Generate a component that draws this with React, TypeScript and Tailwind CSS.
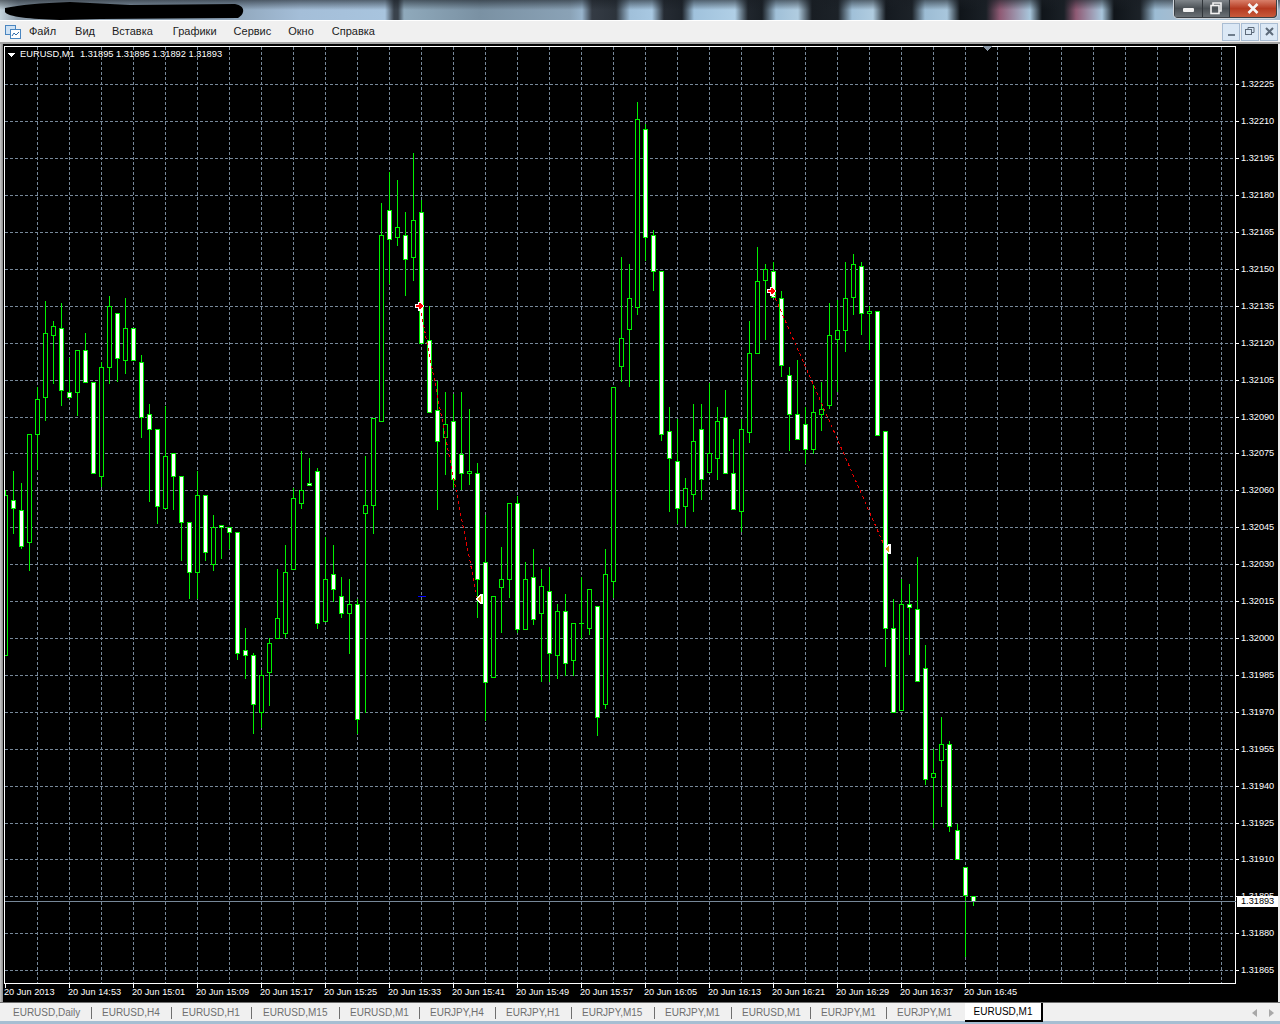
// MT4-style candle chart window
const MENU = [
  { label: 'Файл', ml: '' },
  { label: 'Вид', ml: 'ml-[19px]' },
  { label: 'Вставка', ml: 'ml-[17px]' },
  { label: 'Графики', ml: 'ml-[20px]' },
  { label: 'Сервис', ml: 'ml-[17px]' },
  { label: 'Окно', ml: 'ml-[17px]' },
  { label: 'Справка', ml: 'ml-[18px]' },
];

const GRID_Y = [84, 121, 158, 195, 232, 269, 306, 343, 380, 417, 453, 490, 527, 564, 601, 638, 675, 712, 749, 786, 823, 859, 896, 933, 970];
const PRICES = ['1.32225', '1.32210', '1.32195', '1.32180', '1.32165', '1.32150', '1.32135', '1.32120', '1.32105', '1.32090', '1.32075', '1.32060', '1.32045', '1.32030', '1.32015', '1.32000', '1.31985', '1.31970', '1.31955', '1.31940', '1.31925', '1.31910', '1.31895', '1.31880', '1.31865'];
const TIMES = ['20 Jun 2013', '20 Jun 14:53', '20 Jun 15:01', '20 Jun 15:09', '20 Jun 15:17', '20 Jun 15:25', '20 Jun 15:33', '20 Jun 15:41', '20 Jun 15:49', '20 Jun 15:57', '20 Jun 16:05', '20 Jun 16:13', '20 Jun 16:21', '20 Jun 16:29', '20 Jun 16:37', '20 Jun 16:45'];

const TABS = [
  { label: 'EURUSD,Daily', w: 'w-[89px] pl-[10px]' },
  { label: 'EURUSD,H4', w: 'w-[80px] pl-[10px]' },
  { label: 'EURUSD,H1', w: 'w-[80px] pl-[10px]' },
  { label: 'EURUSD,M15', w: 'w-[88px] pl-[11px]' },
  { label: 'EURUSD,M1', w: 'w-[80px] pl-[10px]' },
  { label: 'EURJPY,H4', w: 'w-[76px] pl-[10px]' },
  { label: 'EURJPY,H1', w: 'w-[76px] pl-[10px]' },
  { label: 'EURJPY,M15', w: 'w-[83px] pl-[10px]' },
  { label: 'EURJPY,M1', w: 'w-[77px] pl-[10px]' },
  { label: 'EURUSD,M1', w: 'w-[79px] pl-[10px]' },
  { label: 'EURJPY,M1', w: 'w-[76px] pl-[10px]' },
  { label: 'EURJPY,M1', w: 'w-[78px] pl-[10px]' },
];

// [filled, wickTop, bodyTop, bodyBottom, wickBottom], one candle per 8px starting at x=5
const CANDLES: number[][] = [
  [0, 490, 495, 655, 655], [1, 471, 500, 508, 533], [1, 483, 510, 546, 548], [0, 434, 434, 542, 570],
  [0, 387, 399, 434, 469], [0, 301, 333, 397, 420], [0, 321, 326, 335, 383], [1, 303, 328, 390, 405],
  [1, 358, 392, 397, 398], [0, 350, 350, 392, 415], [1, 333, 350, 382, 382], [1, 382, 382, 473, 473],
  [0, 362, 367, 476, 486], [0, 296, 306, 367, 383], [1, 313, 313, 358, 381], [0, 298, 328, 360, 373],
  [1, 328, 328, 360, 360], [1, 355, 362, 417, 437], [1, 404, 414, 429, 501], [1, 429, 429, 506, 523],
  [0, 406, 456, 508, 508], [1, 453, 453, 476, 509], [1, 476, 476, 522, 560], [1, 522, 522, 572, 598],
  [0, 471, 495, 572, 598], [1, 495, 495, 552, 560], [0, 515, 527, 564, 570], [1, 525, 525, 527, 558],
  [1, 527, 527, 532, 548], [1, 532, 532, 653, 659], [1, 628, 650, 655, 678], [1, 653, 655, 704, 733],
  [0, 670, 675, 712, 727], [0, 638, 643, 672, 705], [0, 569, 618, 638, 638], [0, 545, 572, 633, 637],
  [0, 488, 498, 569, 569], [0, 451, 490, 503, 508], [1, 458, 483, 485, 485], [1, 468, 471, 623, 628],
  [0, 537, 579, 621, 621], [1, 545, 574, 589, 601], [1, 577, 596, 613, 617], [0, 579, 604, 613, 653],
  [1, 599, 604, 719, 733], [0, 456, 505, 513, 712], [0, 418, 418, 505, 533], [0, 203, 235, 421, 421],
  [1, 172, 210, 239, 283], [0, 180, 227, 237, 245], [1, 212, 235, 259, 295], [0, 153, 220, 257, 280],
  [1, 200, 212, 343, 343], [1, 306, 340, 412, 412], [1, 381, 410, 441, 509], [0, 392, 424, 437, 474],
  [1, 394, 421, 479, 487], [1, 392, 454, 473, 489], [0, 409, 471, 473, 484], [1, 463, 473, 579, 617],
  [1, 515, 562, 682, 720], [0, 596, 596, 677, 677], [0, 547, 579, 587, 632], [0, 503, 503, 579, 597],
  [1, 496, 503, 629, 632], [0, 562, 579, 629, 629], [1, 549, 577, 619, 624], [0, 569, 586, 613, 681],
  [1, 567, 591, 653, 681], [0, 604, 611, 655, 678], [1, 594, 611, 663, 675], [0, 623, 623, 660, 675],
  [0, 577, 623, 623, 638], [0, 589, 589, 628, 634], [1, 606, 606, 717, 735], [0, 549, 574, 704, 708],
  [0, 387, 387, 581, 597], [0, 257, 338, 366, 381], [0, 264, 298, 329, 386], [0, 102, 119, 307, 314],
  [1, 124, 129, 237, 260], [1, 230, 235, 271, 290], [1, 271, 271, 434, 440], [1, 407, 431, 458, 511],
  [1, 419, 461, 508, 523], [0, 478, 488, 506, 526], [0, 404, 441, 494, 511], [1, 404, 429, 479, 499],
  [0, 383, 453, 472, 472], [0, 407, 421, 458, 479], [1, 390, 417, 473, 473], [1, 439, 473, 509, 509],
  [0, 419, 429, 511, 531], [0, 321, 353, 432, 442], [0, 247, 281, 353, 353], [0, 264, 269, 280, 339],
  [1, 262, 271, 297, 297], [1, 291, 298, 365, 376], [1, 367, 375, 414, 450], [1, 360, 414, 439, 439],
  [1, 407, 424, 449, 463], [0, 385, 412, 449, 453], [0, 382, 409, 414, 430], [0, 303, 335, 405, 408],
  [0, 300, 330, 339, 391], [0, 262, 298, 330, 351], [0, 254, 264, 297, 314], [1, 262, 266, 313, 334],
  [0, 306, 311, 313, 349], [1, 311, 311, 435, 435], [1, 431, 431, 628, 666], [1, 599, 628, 712, 712],
  [0, 579, 604, 710, 710], [1, 584, 604, 607, 654], [1, 557, 609, 681, 681], [1, 645, 668, 779, 784],
  [0, 749, 773, 777, 827], [0, 717, 744, 760, 806], [1, 741, 744, 826, 831], [1, 824, 830, 859, 859],
  [1, 867, 867, 895, 956], [1, 896, 896, 901, 905],
];

function Candle({ data, index }: { data: number[]; index: number }) {
  const [filled, wickTop, bodyTop, bodyBottom, wickBottom] = data;
  const x = 5 + index * 8;
  const h = bodyBottom - bodyTop + 1;
  return (
    <g>
      <rect x={x} y={wickTop} width={1} height={wickBottom - wickTop + 1} className="fill-[#00f000]" />
      <rect x={x - 2} y={bodyTop} width={5} height={h} className="fill-[#00f000]" />
      {h > 2 && <rect x={x - 1} y={bodyTop + 1} width={3} height={h - 2} className={filled ? 'fill-white' : 'fill-black'} />}
    </g>
  );
}

function RedArrow({ x, y }: { x: number; y: number }) {
  return (
    <g transform={`translate(${x} ${y})`}>
      <path d="M-4 -2h3v-2h3l3 4-3 5h-3v-3h-3z" className="fill-white" />
      <path d="M-3 -1h3v-2h1l3 3-3 3h-1v-2h-3z" className="fill-[#ff0000]" />
    </g>
  );
}

function GoldArrow({ x, y }: { x: number; y: number }) {
  return (
    <g transform={`translate(${x} ${y})`}>
      <path d="M-3 0l4 -5h3v10h-3z" className="fill-white" />
      <path d="M-2 0l4 -4v8z" className="fill-[#daa520]" />
    </g>
  );
}

function Chart() {
  return (
    <svg viewBox="3 44 1275 958" width={1275} height={958} shapeRendering="crispEdges" className="block bg-black">
      <defs>
        <clipPath id="plot"><rect x={5} y={47} width={1230} height={936} /></clipPath>
      </defs>

      {GRID_Y.map(y => (
        <line key={y} x1={5} x2={1235} y1={y + 0.5} y2={y + 0.5} strokeDasharray="3 2" className="stroke-[#778899]" />
      ))}
      {Array.from({ length: 38 }, (_, i) => 37 + i * 32).map(x => (
        <line key={x} x1={x + 0.5} x2={x + 0.5} y1={47} y2={983} strokeDasharray="3 2" className="stroke-[#778899]" />
      ))}

      <g clipPath="url(#plot)">
        {CANDLES.map((c, i) => <Candle key={i} data={c} index={i} />)}
        <line x1={420} y1={307} x2={477} y2={597} strokeDasharray="3 3" className="stroke-[#e80000]" />
        <line x1={773} y1={293} x2={884} y2={545} strokeDasharray="3 3" className="stroke-[#e80000]" />
        <rect x={418} y={596} width={8} height={1} className="fill-[#0000ff]" />
        <RedArrow x={419} y={306} />
        <RedArrow x={771} y={291} />
        <GoldArrow x={479} y={599} />
        <GoldArrow x={887} y={549} />
      </g>

      <rect x={4.5} y={46.5} width={1231} height={937} fill="none" className="stroke-white" />
      <rect x={5} y={901} width={1231} height={1} className="fill-[#778899]" />

      {GRID_Y.map((y, i) => (
        <g key={y}>
          <rect x={1236} y={y} width={3} height={1} className="fill-white" />
          <text x={1241} y={y + 3} className="fill-white text-[9.2px]">{PRICES[i]}</text>
        </g>
      ))}
      <rect x={1237} y={896} width={41} height={11} className="fill-white" />
      <text x={1241} y={904} className="fill-black text-[9.2px]">1.31893</text>

      {TIMES.map((t, i) => (
        <g key={t}>
          <rect x={5 + i * 64} y={984} width={1} height={4} className="fill-white" />
          <text x={4 + i * 64} y={995} className="fill-white text-[9.2px]">{t}</text>
        </g>
      ))}

      <path d="M8 53h7l-3.5 4z" className="fill-white" />
      <text x={20} y={57} className="fill-white text-[9.3px]" xmlSpace="preserve">EURUSD,M1  1.31895 1.31895 1.31892 1.31893</text>
      <path d="M983 46h9l-4.5 5z" className="fill-[#8a97a5]" />
    </svg>
  );
}

function TitleBar() {
  return (
    <div className="relative h-[20px] flex justify-between bg-[linear-gradient(rgba(25,30,36,0.6),rgba(25,30,36,0)_50%),linear-gradient(90deg,#c3d3dc_0,#8a9aa8_18px,#8fa5ba_230px,#a4bed8_300px,#a8c4de_385px,#39424c_394px,#39424c_398px,#8fa9bb_404px,#7a91a3_480px,#8aa2b6_570px,#98b4cc_582px,#343b44_592px,#2c333b_616px,#a0c0da_630px,#a8c8e2_652px,#252b33_664px,#1e242b_682px,#a0c2dc_694px,#b0cfe6_735px,#20262d_748px,#1a2026_762px,#a0c0d8_776px,#b0cce0_798px,#181d23_812px,#1c2228_838px,#a0c0d8_852px,#b0cce0_873px,#151a20_886px,#1c2228_912px,#9cbcd4_925px,#a8c6dc_947px,#10151a_960px,#1a2026_986px,#8f5a74_1000px,#a8c6dc_1030px,#10151a_1042px,#1a2026_1064px,#8f5a74_1076px,#a8c6dc_1102px,#10151a_1114px,#1c2228_1140px,#9cbcd4_1155px,#a4bcd0_1174px)]">
      <svg width={250} height={20} className="block">
        <path d="M5 8C20 5 40 3 70 2L130 5L235 4C246 6 245 14 238 18L100 19L60 20C30 19 8 17 5 12Z" className="fill-black" />
      </svg>
      <div className="mr-[3px] flex h-[18px] w-[103px] rounded-b-[4px] border border-t-0 border-[#3a3f44] bg-[#5b6166] shadow-[0_0_0_1px_#d0d6dc]">
        <div className="flex w-[28px] items-center justify-center border-r border-[#30353a] bg-[linear-gradient(#7f858a,#4a5055_50%,#6a7075)]">
          <div className="mt-[3px] h-[4px] w-[11px] rounded-[1px] bg-[#f2f2f2]" />
        </div>
        <div className="flex w-[27px] items-center justify-center border-r border-[#30353a] bg-[linear-gradient(#7f858a,#4a5055_50%,#6a7075)]">
          <svg width={14} height={13} viewBox="0 0 14 13" fill="none" className="stroke-[#f2f2f2] stroke-[1.6]">
            <path d="M4 3V1h8v8h-2" />
            <rect x={2} y={3.5} width={8} height={8} />
          </svg>
        </div>
        <div className="flex flex-1 items-center justify-center rounded-br-[4px] bg-[linear-gradient(#d9806a,#b53a20_50%,#c85a3a)]">
          <svg width={12} height={11} viewBox="0 0 12 11" className="stroke-[#f6f6f6] stroke-[2.6]">
            <path d="M1.5 1l9 9M10.5 1l-9 9" />
          </svg>
        </div>
      </div>
    </div>
  );
}

function MenuBar() {
  return (
    <div className="flex h-[24px] items-center justify-between border-t border-white border-b-2 border-b-[#a4a4a4] bg-[#f0f0f0]">
      <div className="flex items-center">
        <svg width={16} height={16} viewBox="0 0 16 16" fill="none" className="ml-[5px] mr-[8px]">
          <rect x={0.5} y={1.5} width={10} height={9} className="fill-[#cfe2f4] stroke-[#4a86c0]" />
          <rect x={5.5} y={5.5} width={10} height={9} className="fill-white stroke-[#4a86c0]" />
          <path d="M7 12l2-3 2 2 3-3" className="stroke-[#2e6aa8]" />
        </svg>
        <div className="flex text-[11px] text-[#1c1c1c]">
          {MENU.map(m => <span key={m.label} className={m.ml}>{m.label}</span>)}
        </div>
      </div>
      <div className="mr-[2px] flex gap-[1px]">
        <div className="flex h-[18px] w-[18px] items-end justify-center border border-[#a9bdd3] bg-[#dbe8f5] pb-[4px]">
          <div className="h-[2px] w-[7px] bg-[#6e7d8c]" />
        </div>
        <div className="flex h-[18px] w-[18px] items-center justify-center border border-[#a9bdd3] bg-[#dbe8f5]">
          <svg width={10} height={9} viewBox="0 0 10 9" fill="none" className="stroke-[#5d6b7a]">
            <path d="M3 2.5V.5h6v5H7" />
            <rect x={0.5} y={2.5} width={6} height={5} />
          </svg>
        </div>
        <div className="flex h-[18px] w-[18px] items-center justify-center border border-[#a9bdd3] bg-[#dbe8f5]">
          <svg width={9} height={9} viewBox="0 0 9 9" className="stroke-[#5d6b7a] stroke-2">
            <path d="M1 1l7 7M8 1l-7 7" />
          </svg>
        </div>
      </div>
    </div>
  );
}

function TabBar() {
  return (
    <div className="flex h-[22px] items-start border-t border-[#6e6e6e] bg-[#f0f0f0] shadow-[inset_0_-3px_0_#a6bed2]">
      <div className="ml-[3px] flex h-[19px] items-center text-[10px] text-[#6f6f6f]">
        {TABS.map((t, i) => (
          <div key={i} className={`${t.w} flex h-[12px] items-center ${i < TABS.length - 1 ? 'border-r border-[#6f6f6f]' : ''}`}>{t.label}</div>
        ))}
      </div>
      <div className="flex h-[19px] w-[78px] items-center justify-center border-r-2 border-b-2 border-black bg-white text-[10px] text-black">EURUSD,M1</div>
      <div className="ml-auto mr-[6px] flex h-[19px] items-center gap-[10px]">
        <svg width={6} height={8} viewBox="0 0 6 8" className="fill-[#a8a8a8]"><path d="M5 0v8L0 4z" /></svg>
        <svg width={6} height={8} viewBox="0 0 6 8" className="fill-[#a8a8a8]"><path d="M1 0v8l5-4z" /></svg>
      </div>
    </div>
  );
}

export default function App() {
  return (
    <div className="flex h-[1024px] w-[1280px] flex-col overflow-hidden bg-black font-['Liberation_Sans',Arial,sans-serif]">
      <TitleBar />
      <MenuBar />
      <div className="flex">
        <div className="w-[3px] bg-[linear-gradient(90deg,#c8c8c8,#8c8c8c)]" />
        <Chart />
        <div className="w-[2px] bg-[#e8e8e8]" />
      </div>
      <TabBar />
    </div>
  );
}
